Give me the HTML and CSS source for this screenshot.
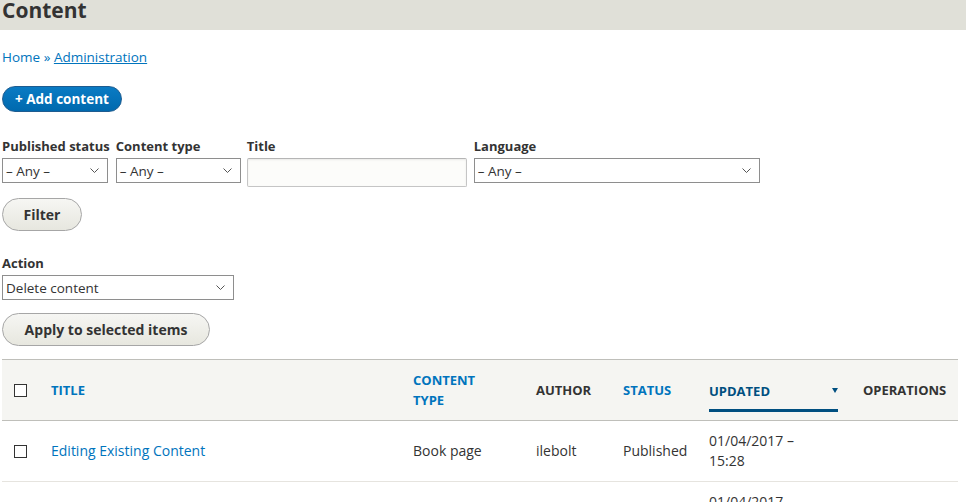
FILE: index.html
```html
<!DOCTYPE html>
<html>
<head>
<meta charset="utf-8">
<link rel="stylesheet" href="styles.css">
</head>
<body>
<header class="page-head"><h1 class="page-title">Content</h1></header>
<main class="page">
  <nav class="breadcrumb"><a class="crumb-home" href="#">Home</a> » <a class="crumb-link" href="#">Administration</a></nav>
  <div class="actions"><a class="btn-primary" href="#">+ Add content</a></div>
  <div class="filters">
    <div class="field">
      <label class="label">Published status</label>
      <div class="select w-status"><span>– Any –</span><svg class="chev" viewBox="0 0 9 5"><path d="M0.5 0.5 L4.5 4.5 L8.5 0.5" fill="none" stroke="#555" stroke-width="1"/></svg></div>
    </div>
    <div class="field">
      <label class="label">Content type</label>
      <div class="select w-type"><span>– Any –</span><svg class="chev" viewBox="0 0 9 5"><path d="M0.5 0.5 L4.5 4.5 L8.5 0.5" fill="none" stroke="#555" stroke-width="1"/></svg></div>
    </div>
    <div class="field field-title">
      <label class="label">Title</label>
      <div class="text-input"></div>
    </div>
    <div class="field">
      <label class="label">Language</label>
      <div class="select w-lang"><span>– Any –</span><svg class="chev" viewBox="0 0 9 5"><path d="M0.5 0.5 L4.5 4.5 L8.5 0.5" fill="none" stroke="#555" stroke-width="1"/></svg></div>
    </div>
  </div>
  <div class="btn-row"><button class="btn w-filter">Filter</button></div>
  <div class="bulk">
    <label class="label">Action</label>
    <div class="select w-action"><span>Delete content</span><svg class="chev" viewBox="0 0 9 5"><path d="M0.5 0.5 L4.5 4.5 L8.5 0.5" fill="none" stroke="#555" stroke-width="1"/></svg></div>
  </div>
  <div class="btn-row2"><button class="btn w-apply">Apply to selected items</button></div>
  <table class="content-table">
    <colgroup>
      <col class="c-cb"><col class="c-title"><col class="c-type"><col class="c-author"><col class="c-status"><col class="c-updated"><col class="c-ops">
    </colgroup>
    <thead>
      <tr>
        <th><span class="checkbox"></span></th>
        <th><a class="sort" href="#">TITLE</a></th>
        <th><a class="sort" href="#">CONTENT<br>TYPE</a></th>
        <th>AUTHOR</th>
        <th><a class="sort" href="#">STATUS</a></th>
        <th class="th-updated"><div class="active-sort"><span>UPDATED</span><span class="tri"></span></div></th>
        <th>OPERATIONS</th>
      </tr>
    </thead>
    <tbody>
      <tr>
        <td><span class="checkbox"></span></td>
        <td><a class="row-link" href="#">Editing Existing Content</a></td>
        <td>Book page</td>
        <td>ilebolt</td>
        <td>Published</td>
        <td>01/04/2017 –<br>15:28</td>
        <td></td>
      </tr>
      <tr>
        <td><span class="checkbox"></span></td>
        <td><a class="row-link" href="#">Adding New Content</a></td>
        <td>Book page</td>
        <td>ilebolt</td>
        <td>Published</td>
        <td>01/04/2017 –<br>15:20</td>
        <td></td>
      </tr>
    </tbody>
  </table>
</main>
</body>
</html>
```

FILE: styles.css
```css
* { box-sizing: border-box; }
html, body { margin: 0; padding: 0; background: #fff; overflow: hidden; }
body {
  font-family: "Open Sans", "Noto Sans", sans-serif;
  font-size: 13px;
  color: #333;
}
.page-head {
  height: 30px;
  background: #e0e0d8;
  padding: 0 2px;
  overflow: hidden;
}
.page-title {
  margin: 0;
  margin-top: -6px;
  font-size: 21px;
  line-height: 32px;
  font-weight: 700;
  color: #333;
}
.page { padding: 0 8px 0 2px; }
.breadcrumb {
  margin-top: 18px;
  line-height: 18px;
  color: #0074bd;
  font-size: 13.5px;
}
.breadcrumb a { color: #0074bd; }
.crumb-home { text-decoration: none; }
.crumb-link { text-decoration: underline; }
.actions { margin-top: 20px; display: flex; }
.btn-primary {
  display: inline-flex;
  align-items: center;
  height: 26px;
  padding: 0 12px 0 12px;
  border-radius: 14px;
  background: linear-gradient(#0a7bc4, #0069ae);
  border: 1px solid #1e5c90;
  color: #fff;
  font-weight: 700;
  font-size: 13.5px;
  text-decoration: none;
}
.filters {
  display: flex;
  align-items: flex-start;
  margin-top: 26px;
}
.field { display: flex; flex-direction: column; margin-right: 6px; }
.field-title { margin-right: 7px; }
.label {
  display: block;
  font-weight: 700;
  font-size: 13px;
  line-height: 16px;
  margin-bottom: 4px;
  color: #333;
}
.select {
  display: flex;
  align-items: center;
  justify-content: space-between;
  height: 25px;
  border: 1px solid #8e8e8e;
  background: #fff;
  padding: 0 8px 0 3px;
  font-size: 13.5px;
  color: #333;
}
.chev { width: 9px; height: 5px; }
.w-status { width: 106px; }
.w-type { width: 125px; }
.w-lang { width: 286px; }
.w-action { width: 232px; }
.text-input {
  width: 220px;
  height: 29px;
  border: 1px solid #c5c5c5;
  border-top-color: #b5b5b5;
  border-radius: 2px;
  background: #fcfcfa;
  box-shadow: inset 0 1px 2px rgba(0,0,0,0.08);
}
.btn-row { margin-top: 11px; display: flex; }
.btn {
  display: inline-flex;
  align-items: center;
  justify-content: center;
  height: 33px;
  border: 1px solid #a6a6a6;
  border-radius: 17px;
  background: linear-gradient(#f6f6f3, #e7e7df);
  font-family: "Open Sans", "Noto Sans", sans-serif;
  font-size: 14px;
  font-weight: 700;
  color: #333;
  padding: 0;
}
.w-filter { width: 80px; }
.w-apply { width: 208px; }
.bulk { margin-top: 24px; }
.bulk .label { margin-bottom: 4px; }
.btn-row2 { margin-top: 13px; display: flex; }
.content-table {
  margin-top: 13px;
  width: 956px;
  border-collapse: collapse;
  table-layout: fixed;
}
.c-cb { width: 37px; }
.c-title { width: 362px; }
.c-type { width: 123px; }
.c-author { width: 87px; }
.c-status { width: 86px; }
.c-updated { width: 154px; }
.c-ops { width: 107px; }
thead tr {
  background: #f5f5f2;
  border-top: 1px solid #bfbfba;
  border-bottom: 1px solid #bfbfba;
}
th {
  height: 61px;
  text-align: left;
  padding: 0 12px;
  font-size: 13px;
  font-weight: 700;
  line-height: 20px;
  color: #333;
  vertical-align: middle;
}
th:first-child, td:first-child { padding: 0 0 0 12px; }
.sort { color: #0074bd; text-decoration: none; }
.th-updated { padding-right: 13px; }
.active-sort {
  display: flex;
  justify-content: space-between;
  color: #004f80;
  border-bottom: 3px solid #004f80;
  height: 36px;
  padding-top: 5px;
  margin-top: 7px;
  align-items: flex-start;
}
.tri {
  width: 0; height: 0;
  border-left: 3.5px solid transparent;
  border-right: 3.5px solid transparent;
  border-top: 5px solid #004f80;
  margin-top: 7px;
  margin-right: 0;
}
.checkbox {
  display: block;
  width: 13px;
  height: 13px;
  border: 1px solid #333;
  background: #fff;
}
tbody tr { border-bottom: 1px solid #e6e4df; }
td {
  height: 61px;
  padding: 0 12px;
  font-size: 14px;
  line-height: 20px;
  color: #333;
  vertical-align: middle;
}
.row-link { color: #0074bd; text-decoration: none; }
```
